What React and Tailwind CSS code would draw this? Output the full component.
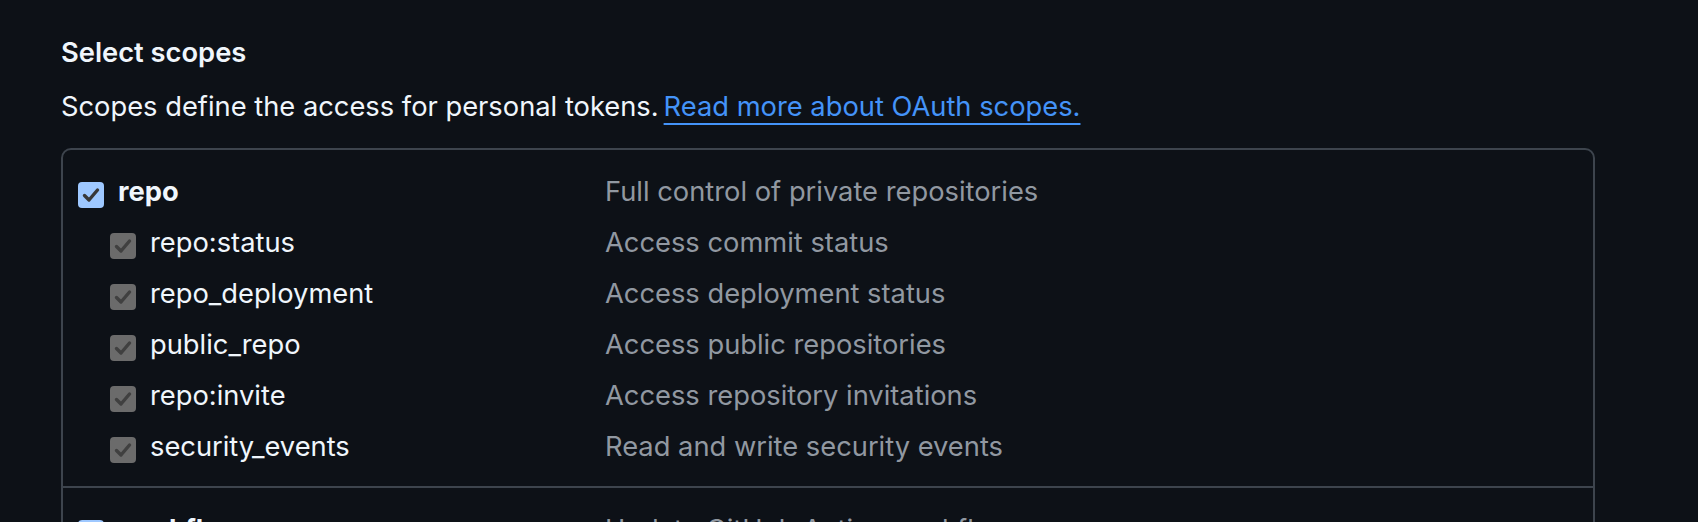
import React from 'react'

const SUB_SCOPES = [
    { name: 'repo:status', description: 'Access commit status' },
    { name: 'repo_deployment', description: 'Access deployment status' },
    { name: 'public_repo', description: 'Access public repositories' },
    { name: 'repo:invite', description: 'Access repository invitations' },
    { name: 'security_events', description: 'Read and write security events' },
]

function CheckBox(props) {
    const { disabled } = props
    const box = disabled ? 'bg-[#6b6b6b]' : 'bg-[#9ec8ff]'
    return <span className={`${box} w-[26px] h-[26px] rounded-[4px] flex items-center justify-center shrink-0 mt-[4px]`}>
        <svg viewBox="0 0 26 26" className="w-[26px] h-[26px]">
            <path d="M6.5 13.5 L11 18 L19.5 8" fill="none" stroke={disabled ? '#404040' : '#383838'} strokeWidth="3.4" strokeLinecap="round" strokeLinejoin="round" />
        </svg>
    </span>
}

function ScopeRow(props) {
    const { name, description, parent, disabled } = props
    return <div className='flex items-center h-[51px]'>
        <div className={`flex items-center w-[527px] gap-[14px] ${parent ? '' : 'pl-[32px]'}`}>
            <CheckBox disabled={disabled}></CheckBox>
            <span className={`text-[#f0f6fc] ${parent ? 'font-bold' : ''}`}>{name}</span>
        </div>
        <span className='text-[#9198a1]'>{description}</span>
    </div>
}

export default function App() {
    return (
        <div className='bg-[#0d1117] h-[522px] overflow-hidden pl-[61px] w-full font-["Inter","Noto_Sans",sans-serif] text-[27.3px] leading-[40.5px]'>
            <h3 className='text-[#f0f6fc] font-semibold pt-[33px]'>Select scopes</h3>
            <p className='text-[#f0f6fc] mt-[13.5px]'>
                Scopes define the access for personal tokens.
                <a href="#" className='ml-[5px] text-[#4493f8] underline decoration-2 underline-offset-[7px]'>Read more about OAuth scopes.</a>
            </p>
            <div className='mt-[20.5px] border-2 border-[#3d444d] rounded-[10px] w-[1534px]'>
                <div className='px-[15px] pt-[17px] pb-[13px]'>
                    <ScopeRow parent name="repo" description="Full control of private repositories"></ScopeRow>
                    {SUB_SCOPES.map((item) => <ScopeRow key={item.name} disabled name={item.name} description={item.description}></ScopeRow>)}
                </div>
                <div className='px-[15px] pt-[17px] pb-[13px] border-t-2 border-[#3d444d]'>
                    <ScopeRow parent name="workflow" description="Update GitHub Action workflows"></ScopeRow>
                </div>
            </div>
        </div>
    )
}
